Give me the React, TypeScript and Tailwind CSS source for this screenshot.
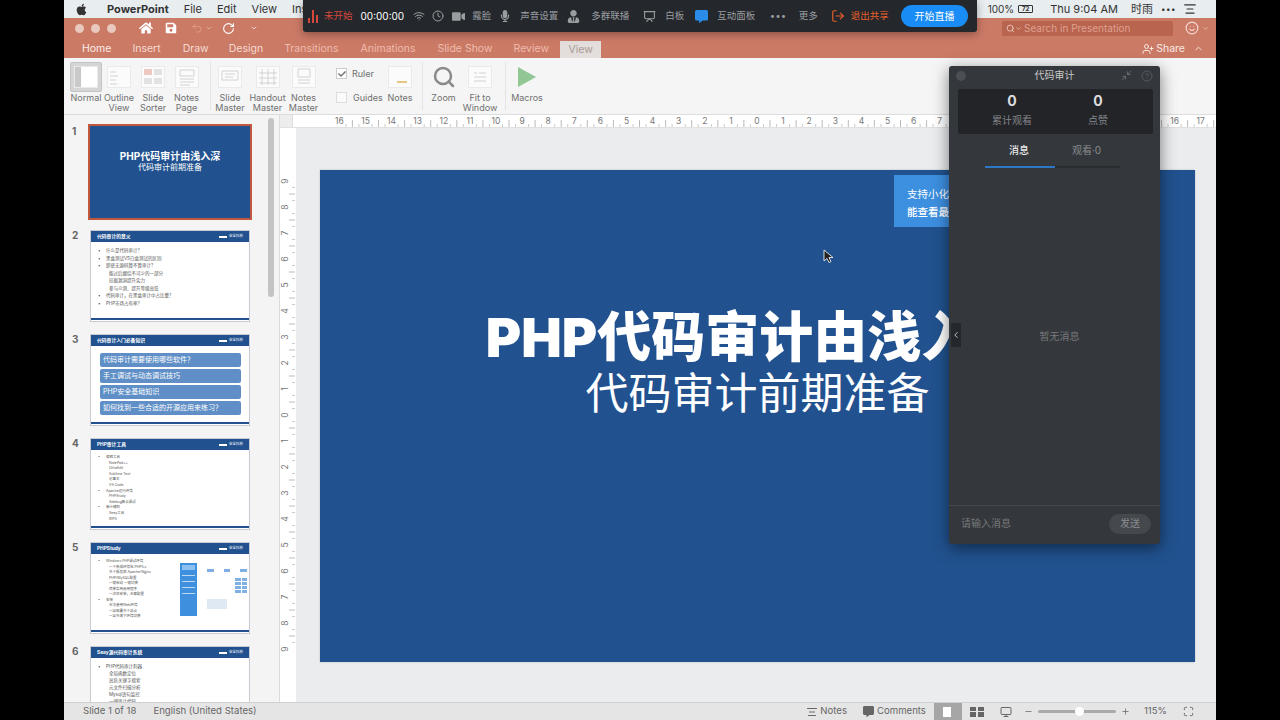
import type { ReactNode } from 'react'
import { FaApple, FaHome, FaSave, FaCommentAlt, FaVideo, FaMicrophone, FaUserTie, FaCheck } from 'react-icons/fa'
import { ChevronLeft, ChevronUp, ChevronDown, Clock, Minus, Plus, RotateCw, Search, Smile, Undo2, Wifi, LogOut, Maximize, Monitor, Minimize2, CircleHelp, UserPlus, Presentation, AlignCenter } from 'lucide-react'

const TABS = [
  { label: 'Home', cls: 'ml-[18px] text-[#fbeee9]' },
  { label: 'Insert', cls: 'ml-[21px] text-[#f6dbd2]' },
  { label: 'Draw', cls: 'ml-[22px] text-[#f6dbd2]' },
  { label: 'Design', cls: 'ml-[20px] text-[#f6dbd2]' },
  { label: 'Transitions', cls: 'ml-[21px] text-[#eebcad]' },
  { label: 'Animations', cls: 'ml-[22px] text-[#eebcad]' },
  { label: 'Slide Show', cls: 'ml-[22px] text-[#eebcad]' },
  { label: 'Review', cls: 'ml-[21px] text-[#eebcad]' },
]

function RulerTop() {
  const nums = Array.from({ length: 35 }, (_, i) => i - 17)
  return (
    <svg width="923" height="13" className="block">
      {nums.map((n) => {
        const x = 757 - 293 + n * 26.1
        if (x < 30) return null
        // the chat panel covers this stretch of the ruler
        const hidden = x + 293 > 945 && x + 293 < 1165
        return (
          <g key={n}>
            {!hidden && <text x={x} y="9" fontSize="8.5" fill="#777" textAnchor="middle" fontFamily="Inter">{Math.abs(n)}</text>}
            <line x1={x + 13} x2={x + 13} y1="5" y2="12" stroke="#bbb" />
            <line x1={x + 6.5} x2={x + 6.5} y1="9" y2="12" stroke="#ccc" />
            <line x1={x + 19.5} x2={x + 19.5} y1="9" y2="12" stroke="#ccc" />
          </g>
        )
      })}
    </svg>
  )
}

function RulerLeft() {
  const nums = Array.from({ length: 19 }, (_, i) => i - 9)
  return (
    <svg width="16" height="574" className="block">
      {nums.map((n) => {
        const y = 415 - 128 + n * 26
        return (
          <g key={n}>
            <text x="6" y={y} fontSize="8.5" fill="#777" textAnchor="middle" fontFamily="Inter" transform={`rotate(-90 6 ${y})`} dominantBaseline="middle">{Math.abs(n)}</text>
            {n < 9 && <line x1="9" x2="15" y1={y + 13} y2={y + 13} stroke="#bbb" />}
            {n < 9 && <line x1="12" x2="15" y1={y + 6.5} y2={y + 6.5} stroke="#ccc" />}
            {n < 9 && <line x1="12" x2="15" y1={y + 19.5} y2={y + 19.5} stroke="#ccc" />}
          </g>
        )
      })}
    </svg>
  )
}

function RibbonButton({ width, label, icon, active }: { width: string; label: ReactNode; icon: ReactNode; active?: boolean }) {
  return (
    <div className={`${width} flex flex-col items-center shrink-0`}>
      <div className={`w-full h-[30px] flex items-center justify-center rounded-[2px] ${active ? 'bg-[#d5d5d5] border border-[#c4c4c4]' : ''}`}>
        {icon}
      </div>
      <div className="text-[9px] leading-[9.5px] mt-[1px] text-center text-[#707070] whitespace-nowrap">{label}</div>
    </div>
  )
}

function SlideIcon({ kind }: { kind: string }) {
  return (
    <svg width="26" height="24" viewBox="0 0 26 24" fill="none" stroke="#d2d2d2">
      <rect x="1.5" y="1.5" width="23" height="21" fill="#fbfbfb" stroke="#eaeaea" />
      {kind === 'normal' && <><rect x="2" y="2" width="6" height="20" fill="#c9c9c9" stroke="none" /><rect x="9" y="2" width="15" height="20" fill="#fff" stroke="none" /></>}
      {kind === 'outline' && <path d="M4 7h6M4 11h8M4 15h6M4 19h7" />}
      {kind === 'sorter' && <><rect x="4" y="4" width="8" height="6" fill="#ecc9c1" stroke="none" /><rect x="14" y="4" width="8" height="6" fill="#e2e2e2" stroke="none" /><rect x="4" y="13" width="8" height="6" fill="#e2e2e2" stroke="none" /><rect x="14" y="13" width="8" height="6" fill="#e2e2e2" stroke="none" /></>}
      {kind === 'page' && <path d="M6 5h14v6H6zM6 14h14M6 17h14M6 20h10" />}
      {kind === 'master' && <path d="M5 6h16v9H5zM8 9h10M8 12h8" />}
      {kind === 'handout' && <path d="M7 4v16M13 4v16M19 4v16M4 8h18M4 13h18M4 18h18" />}
      {kind === 'notes' && <path d="M7 4h12v8H7zM7 15h12M7 18h12" />}
      {kind === 'fit' && <path d="M7 8h3M7 12h12M7 16h12M12 8h7" />}
      {kind === 'sticky' && <path d="M10 17h10" stroke="#e7c47f" strokeWidth="2" />}
    </svg>
  )
}

function Sep() {
  return <div className="w-px h-[48px] bg-[#e4e4e4] shrink-0" />
}

function ThumbHeader({ title }: { title: string }) {
  return (
    <div className="h-[11px] bg-[#21528f] flex items-center justify-between px-[6px] shrink-0">
      <span className="text-[4.8px] leading-none font-bold text-white whitespace-nowrap">{title}</span>
      <span className="flex items-center gap-[2px]">
        <span className="w-[8px] h-[2px] bg-white" />
        <span className="text-[3.5px] leading-none text-white">安全科技</span>
      </span>
    </div>
  )
}

function Bullets({ items, size }: { items: { t: string; sub?: boolean }[]; size: string }) {
  return (
    <div className="pl-[7px] pt-[5px] flex flex-col min-w-0 overflow-hidden">
      {items.map((it) => (
        <div key={it.t} className={`${size} whitespace-nowrap text-[#555] flex items-center ${it.sub ? 'pl-[3px]' : ''}`}>
          <span className="w-[8px] shrink-0">{it.sub ? '' : '•'}</span>{it.t}
        </div>
      ))}
    </div>
  )
}

function ContentThumb({ title, children }: { title: string; children: ReactNode }) {
  return (
    <div className="w-[160px] h-[92px] shrink-0 bg-white border border-[#c8ccd2] flex flex-col overflow-hidden">
      <ThumbHeader title={title} />
      <div className="flex-1 min-h-0 overflow-hidden">{children}</div>
      <div className="h-[2px] bg-[#21528f] mb-[1px] shrink-0" />
    </div>
  )
}

function ThumbRow({ n, children }: { n: number; children: ReactNode }) {
  return (
    <div className="flex h-[92px] shrink-0">
      <div className="w-[26px] pl-[8px] text-[10px] leading-[10px] font-bold text-[#666]">{n}</div>
      {children}
    </div>
  )
}

function Pill({ text }: { text: string }) {
  return <div className="h-[14px] rounded-[2px] bg-[#5f8fc6] text-white text-[7px] leading-[14px] pl-[3px] whitespace-nowrap">{text}</div>
}

function Sidebar() {
  return (
    <div className="w-[216px] shrink-0 bg-[#f4f4f4] border-r border-[#dcdcdc] flex overflow-hidden">
      <div className="w-[204px] shrink-0 flex flex-col gap-[12px] pt-[11px]">
        <ThumbRow n={1}>
          <div className="w-[160px] h-[92px] bg-[#21528f] outline-2 outline-offset-0 outline-[#c0583f] flex flex-col items-center pt-[25px] text-white">
            <div className="text-[10px] leading-[11px] font-bold">PHP代码审计由浅入深</div>
            <div className="text-[8px] leading-[10px]">代码审计前期准备</div>
          </div>
        </ThumbRow>
        <ThumbRow n={2}>
          <ContentThumb title="代码审计的意义">
            <Bullets size="text-[4.5px] leading-[7.5px]" items={[
              { t: '什么是代码审计？' }, { t: '黑盒测试VS白盒测试的区别' }, { t: '即使无源码算不算审计？' },
              { t: '能过后缀绕不可少的一部分', sub: true }, { t: '挖掘漏洞提升实力', sub: true }, { t: '参与众测、提升等级高低', sub: true },
              { t: '代码审计，在黑盒审计中占比重？' }, { t: 'PHP市场占有率？' },
            ]} />
          </ContentThumb>
        </ThumbRow>
        <ThumbRow n={3}>
          <ContentThumb title="代码审计入门必备知识">
            <div className="pl-[9px] pr-[8px] pt-[7px] flex flex-col gap-[2px]">
              <Pill text="代码审计需要使用哪些软件？" />
              <Pill text="手工调试与动态调试技巧" />
              <Pill text="PHP安全基础知识" />
              <Pill text="如何找到一些合适的开源应用来练习？" />
            </div>
          </ContentThumb>
        </ThumbRow>
        <ThumbRow n={4}>
          <ContentThumb title="PHP审计工具">
            <Bullets size="text-[3.5px] leading-[5.6px]" items={[
              { t: '编辑工具' }, { t: 'NotePad++', sub: true }, { t: 'UltraEdit', sub: true }, { t: 'Sublime Text', sub: true }, { t: '记事本', sub: true }, { t: 'VS Code', sub: true },
              { t: 'Apache运行环境' }, { t: 'PHPStudy', sub: true }, { t: 'Xdebug断点调试', sub: true }, { t: '审计辅助' }, { t: 'Seay工具', sub: true }, { t: 'RIPS', sub: true },
            ]} />
          </ContentThumb>
        </ThumbRow>
        <ThumbRow n={5}>
          <ContentThumb title="PHPStudy">
            <div className="flex">
              <Bullets size="text-[3.5px] leading-[5.5px]" items={[
                { t: 'Windows PHP调试环境' }, { t: '一个集成环境包 PHP5.x', sub: true }, { t: '多个服务器 Apache/Nginx', sub: true }, { t: 'PHP/MySQL配置', sub: true },
                { t: '一键启动 一键切换', sub: true }, { t: '简单实用易用程序', sub: true }, { t: '一次性安装，无需配置', sub: true }, { t: '安装' }, { t: '无法使用Web环境', sub: true }, { t: '一站部署多个站点', sub: true }, { t: '一站多端下环境切换', sub: true },
              ]} />
              <div className="w-[69px] h-[53px] mt-[9px] ml-auto flex shrink-0 bg-white">
                <div className="w-[17px] bg-[#3f8fdf] flex flex-col gap-[5px] pt-[2px] px-[2px]">
                  <span className="h-[5px] bg-[#8cc0f0]" /><span className="h-px bg-[#bcd9f5]" /><span className="h-px bg-[#bcd9f5]" /><span className="h-px bg-[#bcd9f5]" /><span className="h-px bg-[#bcd9f5]" />
                </div>
                <div className="flex-1 flex flex-col pl-[10px] pr-[2px] pt-[6px]">
                  <div className="grid grid-cols-3 gap-[10px]">
                    <span className="h-[3px] bg-[#7fb0e4]" /><span className="h-[3px] bg-[#7fb0e4]" /><span className="h-[3px] bg-[#7fb0e4]" />
                  </div>
                  <div className="grid grid-cols-2 gap-[1px] w-[12px] ml-auto mt-[6px]">
                    <span className="h-[3px] bg-[#7fb0e4]" /><span className="h-[3px] bg-[#7fb0e4]" />
                    <span className="h-[3px] bg-[#7fb0e4]" /><span className="h-[3px] bg-[#7fb0e4]" />
                    <span className="h-[3px] bg-[#7fb0e4]" /><span className="h-[3px] bg-[#7fb0e4]" />
                    <span className="h-[3px] bg-[#7fb0e4]" /><span className="h-[3px] bg-[#7fb0e4]" />
                  </div>
                  <div className="w-[20px] h-[10px] mt-[6px] bg-[#dfe9f4]" />
                </div>
              </div>
            </div>
          </ContentThumb>
        </ThumbRow>
        <ThumbRow n={6}>
          <ContentThumb title="Seay源代码审计系统">
            <Bullets size="text-[4.5px] leading-[7px]" items={[
              { t: 'PHP代码审计利器' }, { t: '全局函数定位', sub: true }, { t: '高危关键字搜索', sub: true }, { t: '元文件扫描分析', sub: true }, { t: 'Mysql语句监控', sub: true }, { t: '一键审计代码', sub: true },
            ]} />
          </ContentThumb>
        </ThumbRow>
      </div>
      <div className="w-[6px] h-[179px] mt-[3px] rounded-full bg-[#c4c4c4] shrink-0" />
    </div>
  )
}

function MeetingBar() {
  return (
    <div className="absolute left-[239px] top-0 w-[674px] h-[32px] bg-[#24272b] rounded-b-[3px] shadow-[0_2px_8px_rgba(0,0,0,0.35)] flex items-center text-[9.5px] text-[#9a9da0] whitespace-nowrap">
      <svg width="10" height="14" viewBox="0 0 10 14" className="ml-[5px] shrink-0" fill="#d8483c">
        <rect x="0" y="9" width="2" height="5" /><rect x="4" y="1" width="2" height="13" /><rect x="8" y="6" width="2" height="8" />
      </svg>
      <span className="ml-[6px] text-[9.5px] text-[#d8483c]">未开始</span>
      <span className="ml-[8px] text-[10px] text-white">00:00:00</span>
      <Wifi size={12} className="ml-[9px] shrink-0" />
      <Clock size={12} className="ml-[7px] shrink-0" />
      <FaVideo size={13} className="ml-[8px] shrink-0" />
      <span className="ml-[7px]">露脸</span>
      <FaMicrophone size={12} className="ml-[8px] shrink-0" />
      <span className="ml-[9px]">声音设置</span>
      <FaUserTie size={13} className="ml-[9px] shrink-0" />
      <span className="ml-[11px]">多群联播</span>
      <Presentation size={13} className="ml-[14px] shrink-0" />
      <span className="ml-[9px]">白板</span>
      <FaCommentAlt size={13} className="ml-[11px] shrink-0 text-[#2a8be8]" />
      <span className="ml-[9px]">互动面板</span>
      <span className="ml-[15px] tracking-[1px] font-bold">•••</span>
      <span className="ml-[12px]">更多</span>
      <LogOut size={14} className="ml-[13px] shrink-0 text-[#e8602c]" />
      <span className="ml-[6px] text-[#e8602c]">退出共享</span>
      <div className="ml-auto mr-[9px] w-[67px] h-[22px] rounded-full bg-[#1a8cf5] text-white text-[10px] flex items-center justify-center">开始直播</div>
    </div>
  )
}

function ChatPanel() {
  return (
    <div className="absolute left-[885px] top-[66px] w-[211px] h-[478px] bg-[#34373b] rounded-[3px] shadow-[0_4px_16px_rgba(0,0,0,0.5)] flex flex-col">
      <div className="h-[19px] flex items-center px-[7px] shrink-0">
        <div className="w-[44px]"><div className="w-[10px] h-[10px] rounded-full bg-[#4b4e52]" /></div>
        <span className="flex-1 text-center text-[10px] text-[#c8c8c8]">代码审计</span>
        <div className="w-[44px] flex justify-end items-center">
          <Minimize2 size={11} className="text-[#6b6e72] mr-[9px]" />
          <CircleHelp size={12} className="text-[#55585c]" />
        </div>
      </div>
      <div className="ml-[9px] mr-[7px] mt-[4px] h-[45px] bg-[#232428] rounded-[2px] flex shrink-0">
        <div className="w-[108px] flex flex-col items-center pt-[3px]">
          <span className="text-[14px] leading-[17px] font-bold text-[#dcdcdc]">0</span>
          <span className="text-[10px] leading-[14px] mt-[4px] text-[#85878a]">累计观看</span>
        </div>
        <div className="w-[64px] flex flex-col items-center pt-[3px]">
          <span className="text-[14px] leading-[17px] font-bold text-[#dcdcdc]">0</span>
          <span className="text-[10px] leading-[14px] mt-[4px] text-[#85878a]">点赞</span>
        </div>
      </div>
      <div className="ml-[36px] w-[135px] mt-[9px] shrink-0">
        <div className="flex text-[10px] leading-[14px]">
          <span className="w-[70px] text-center text-[#e8e8e8] font-medium">消息</span>
          <span className="w-[69px] text-center text-[#8a8c8f]">观看·0</span>
        </div>
        <div className="mt-[9px] h-[2px] bg-[#2a2c30]">
          <div className="w-[70px] h-[2px] bg-[#2c78c4]" />
        </div>
      </div>
      <div className="flex-1 flex items-center justify-center text-[10px] text-[#77797c] pl-[10px]">暂无消息</div>
      <div className="h-[39px] border-t border-[#45484c] flex items-center justify-between pl-[12px] pr-[9px] pb-[3px] shrink-0">
        <span className="text-[10px] text-[#77797c]">请输入消息</span>
        <span className="w-[42px] h-[20px] rounded-full bg-[#45484c] text-[#8a8c8f] text-[10px] flex items-center justify-center">发送</span>
      </div>
    </div>
  )
}

export default function App() {
  return (
    <div className="w-[1280px] h-[720px] bg-black overflow-hidden font-[Inter,'Noto_Sans_CJK_SC',sans-serif]">
      <div className="relative w-[1152px] h-[720px] ml-[64px] flex flex-col overflow-hidden">
        <div className="h-[18px] bg-[#e8edf0] flex items-center text-[11px] text-[#333] shrink-0 whitespace-nowrap">
          <FaApple size={13} className="ml-[11px] text-[#333] shrink-0" />
          <span className="ml-[19px] font-bold">PowerPoint</span>
          <span className="ml-[15px]">File</span>
          <span className="ml-[15px]">Edit</span>
          <span className="ml-[15px]">View</span>
          <span className="ml-[15px]">Insert</span>
          <span className="ml-auto text-[10px]">100%</span>
          <span className="ml-[4px] w-[15px] h-[8px] border border-[#333] rounded-[1px] text-[6px] leading-[6px] text-center font-bold">72</span>
          <span className="ml-[17px]">Thu 9:04 AM</span>
          <span className="ml-[13px]">时雨</span>
          <span className="ml-[8px] text-[8px] tracking-[0.5px]">•••</span>
          <AlignCenter size={14} className="ml-[7px] mr-[19px] shrink-0" />
        </div>

        <div className="h-[40px] bg-[#cb7a66] shrink-0 flex flex-col">
          <div className="h-[20px] flex items-center text-white shrink-0">
            <span className="ml-[11px] w-[9px] h-[9px] rounded-full bg-[#e9c8bd]" />
            <span className="ml-[7px] w-[9px] h-[9px] rounded-full bg-[#e9c8bd]" />
            <span className="ml-[7px] w-[9px] h-[9px] rounded-full bg-[#e9c8bd]" />
            <FaHome size={14} className="ml-[23px]" />
            <FaSave size={12} className="ml-[12px]" />
            <Undo2 size={12} className="ml-[14px] text-[#dd9a88]" />
            <ChevronDown size={8} className="ml-[2px] text-[#eac3b7]" />
            <RotateCw size={13} className="ml-[9px]" />
            <ChevronDown size={8} className="ml-[15px]" />
            <div className="ml-auto w-[171px] h-[15px] bg-[#b9644f] rounded-[2px] flex items-center pl-[4px] text-[#dfa08f] text-[10px]">
              <Search size={9} className="text-[#f3d8cf]" />
              <ChevronDown size={7} className="text-[#f3d8cf]" />
              <span className="ml-[2px]">Search in Presentation</span>
            </div>
            <Smile size={14} className="ml-[12px] text-[#f3d8cf]" />
            <ChevronDown size={7} className="ml-[3px] mr-[7px] text-[#f3d8cf]" />
          </div>
          <div className="flex-1 flex items-end text-[10.5px] leading-[18px] whitespace-nowrap">
            {TABS.map((t) => (
              <span key={t.label} className={`${t.cls} h-[20px] pt-[1px] flex items-center`}>{t.label}</span>
            ))}
            <span className="ml-[11px] w-[41px] h-[17px] bg-[#e3dedb] text-[#aa9a96] flex items-center justify-center">View</span>
            <span className="ml-auto h-[20px] pt-[1px] flex items-center text-[#f9e9e3]">
              <UserPlus size={12} />
              <span className="ml-[2px]">Share</span>
              <ChevronUp size={11} className="ml-[8px] mr-[12px]" />
            </span>
          </div>
        </div>

        <div className="h-[57px] bg-[#f5f5f5] border-b border-[#dddddd] shrink-0 flex items-start pt-[4px] pl-[6px]">
          <RibbonButton width="w-[32px]" active label="Normal" icon={<SlideIcon kind="normal" />} />
          <RibbonButton width="w-[34px]" label={<>Outline<br />View</>} icon={<SlideIcon kind="outline" />} />
          <RibbonButton width="w-[34px]" label={<>Slide<br />Sorter</>} icon={<SlideIcon kind="sorter" />} />
          <RibbonButton width="w-[33px]" label={<>Notes<br />Page</>} icon={<SlideIcon kind="page" />} />
          <div className="ml-[7px]"><Sep /></div>
          <RibbonButton width="w-[38px]" label={<>Slide<br />Master</>} icon={<SlideIcon kind="master" />} />
          <RibbonButton width="w-[37px]" label={<>Handout<br />Master</>} icon={<SlideIcon kind="handout" />} />
          <RibbonButton width="w-[35px]" label={<>Notes<br />Master</>} icon={<SlideIcon kind="notes" />} />
          <div className="w-[49px] ml-[15px] flex flex-col gap-[13px] pt-[6px] text-[9px] leading-[11px] text-[#707070] shrink-0">
            <div className="flex items-center">
              <span className="w-[11px] h-[11px] border border-[#ccc] bg-white flex items-center justify-center"><FaCheck size={8} className="text-[#777]" /></span>
              <span className="ml-[5px]">Ruler</span>
            </div>
            <div className="flex items-center">
              <span className="w-[11px] h-[11px] border border-[#ddd] bg-[#fafafa]" />
              <span className="ml-[6px]">Guides</span>
            </div>
          </div>
          <RibbonButton width="w-[30px]" label="Notes" icon={<SlideIcon kind="sticky" />} />
          <div className="ml-[7px]"><Sep /></div>
          <RibbonButton width="w-[41px]" label="Zoom" icon={<Search size={24} strokeWidth={2.5} className="text-[#8a8a8a]" />} />
          <RibbonButton width="w-[32px]" label={<>Fit to<br />Window</>} icon={<SlideIcon kind="fit" />} />
          <div className="ml-[9px]"><Sep /></div>
          <RibbonButton width="w-[42px]" label="Macros" icon={
            <svg width="20" height="22" viewBox="0 0 20 22"><path d="M1 1l18 10L1 21z" fill="#90c795" /></svg>
          } />
        </div>

        <div className="flex-1 min-h-0 flex">
          <Sidebar />
          <div className="flex-1 min-w-0 flex flex-col bg-[#f7f7f7]">
            <div className="h-[13px] flex shrink-0 border-b border-[#e0e0e0]">
              <div className="w-[13px] bg-[#ededed] border-r border-[#ddd] shrink-0" />
              <div className="flex-1 bg-white overflow-hidden"><RulerTop /></div>
            </div>
            <div className="flex-1 min-h-0 flex">
              <div className="w-[16px] bg-white shrink-0 overflow-hidden"><RulerLeft /></div>
              <div className="flex-1 min-w-0 bg-[#eaeced] pl-[24px] pt-[42px]">
                <div className="w-[875px] h-[492px] bg-[#21528f] flex flex-col items-center pt-[134px] text-white shadow-[0_0_2px_rgba(0,0,0,0.2)] relative">
                  <div className="text-[54px] leading-[68px] font-black whitespace-nowrap">PHP代码审计由浅入深</div>
                  <div className="text-[43px] leading-[54px] font-normal whitespace-nowrap -mt-[6px]">代码审计前期准备</div>
                  <div className="absolute left-[574px] top-[5px] w-[55px] h-[52px] bg-[#3d8fe0] pl-[13px] pt-[11px] text-[10.5px] leading-[18px] text-white overflow-hidden whitespace-nowrap">
                    <div>支持小化</div>
                    <div className="font-medium">能查看最</div>
                  </div>
                </div>
              </div>
            </div>
          </div>
        </div>

        <div className="h-[18px] bg-[#e5e5e5] border-t border-[#cfcfcf] shrink-0 flex items-center text-[9.6px] text-[#666] whitespace-nowrap">
          <span className="ml-[19px]">Slide 1 of 18</span>
          <span className="ml-[17px]">English (United States)</span>
          <AlignCenter size={12} className="ml-auto shrink-0" />
          <span className="ml-[2px]">Notes</span>
          <FaCommentAlt size={11} className="ml-[16px] shrink-0" />
          <span className="ml-[3px]">Comments</span>
          <div className="ml-[8px] w-[28px] h-[18px] bg-[#a6a6a6] flex items-center justify-center">
            <span className="w-[10px] h-[10px] bg-white border-r-2 border-[#a6a6a6]" />
          </div>
          <div className="ml-[8px] w-[14px] h-[10px] grid grid-cols-2 gap-[1.5px] shrink-0">
            <span className="bg-[#666]" /><span className="bg-[#666]" /><span className="bg-[#666]" /><span className="bg-[#666]" />
          </div>
          <Monitor size={12} className="ml-[16px] shrink-0" />
          <Minus size={9} className="ml-[12px] shrink-0" />
          <div className="ml-[5px] w-[78px] h-[3px] bg-[#aaa] rounded-full relative shrink-0">
            <span className="absolute left-[37px] -top-[3px] w-[9px] h-[9px] rounded-full bg-white" />
          </div>
          <Plus size={9} className="ml-[5px] shrink-0" />
          <span className="ml-[14px]">115%</span>
          <Maximize size={11} className="ml-[16px] mr-[22px] shrink-0" />
        </div>

        <MeetingBar />
        <ChatPanel />
        <div className="absolute left-[887px] top-[323px] w-[10px] h-[24px] bg-[#24272b] flex items-center justify-center">
          <ChevronLeft size={10} className="text-[#ddd] shrink-0" />
        </div>
        <svg width="11" height="15" viewBox="0 0 11 15" className="absolute left-[759px] top-[249px]">
          <path d="M1 1v11l3-2.5 2 4 2-1-2-4h4z" fill="#222" stroke="#fff" strokeWidth="0.8" />
        </svg>
      </div>
    </div>
  )
}
